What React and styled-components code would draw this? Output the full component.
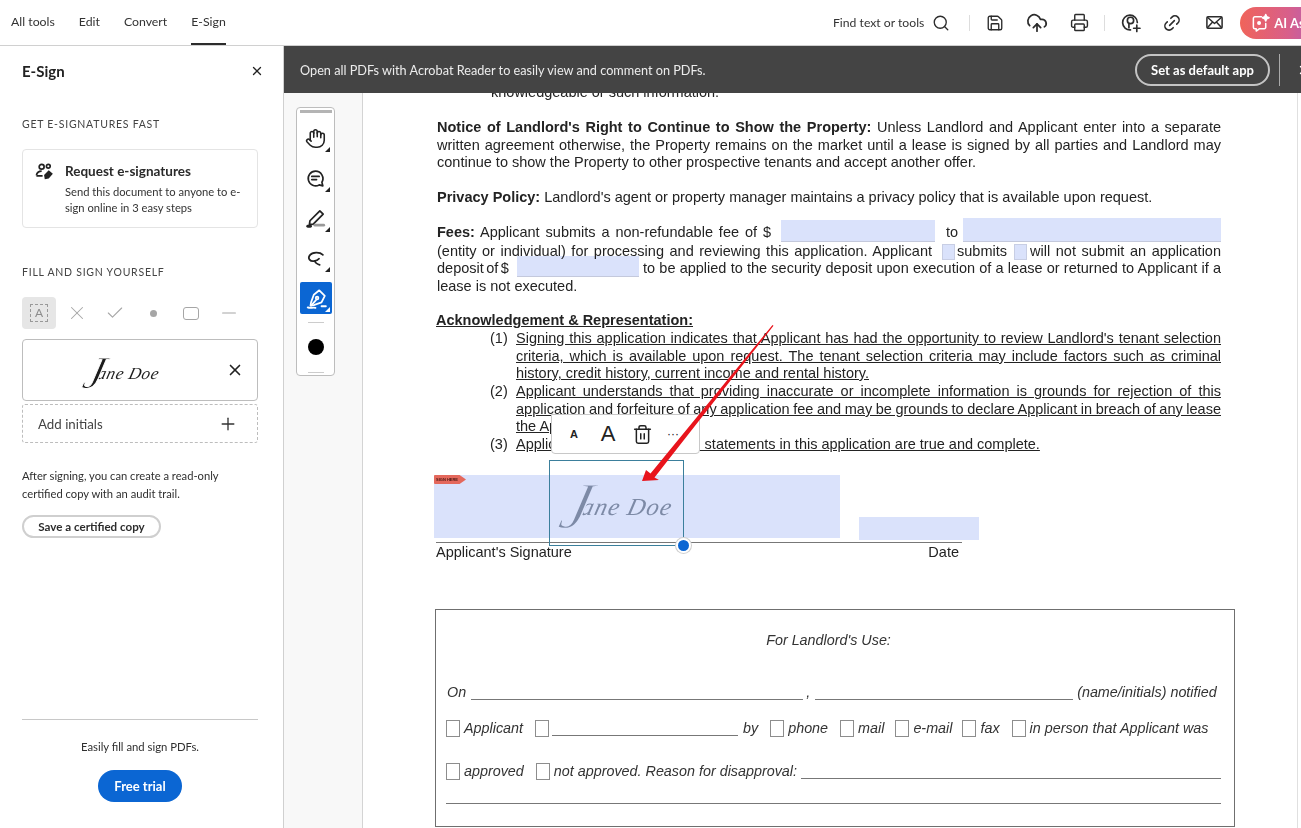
import React from "react";
import styled, { createGlobalStyle, css } from "styled-components";
import { Search, Save, CloudUpload, Printer, Link2, X, Plus, Trash2, Hand, Check, Minus } from "lucide-react";

const Global = createGlobalStyle`
  html, body { margin: 0; padding: 0; background: #fff; }
  * { box-sizing: border-box; }
`;
const UI = `"Lato", "Noto Sans", sans-serif`;
const DOC = `"Liberation Sans", Arial, sans-serif`;

const Shell = styled.div`
  width: 1301px; height: 828px; overflow: hidden; display: flex; flex-direction: column;
  font-family: ${UI}; color: #2c2c2c; background: #fff;
`;
const TopBar = styled.header`
  flex: 0 0 46px; display: flex; align-items: center; border-bottom: 1px solid #d0d0d0; overflow: hidden;
`;
const Nav = styled.nav`
  flex: 0 0 833px; height: 45px; display: flex; gap: 24px; padding-left: 11px;
`;
const NavItem = styled.a`
  height: 45px; display: flex; align-items: center; font-size: 12.3px; color: #333;
  padding-bottom: 1px; border-bottom: 2px solid ${p => (p.$active ? "#2c2c2c" : "transparent")};
`;
const FindText = styled.span`
  flex: 0 0 91px; white-space: nowrap; font-size: 12.2px; color: #333; margin-right: 8px;
`;
const SearchSlot = styled.span`
  flex: 0 0 18px; display: flex; color: #2c2c2c;
`;
const VRule = styled.span`
  flex: 0 0 1px; height: 16px; background: #ddd; margin: 0 ${p => p.$r}px 0 ${p => p.$l}px;
`;
const IconSlot = styled.span`
  flex: 0 0 42px; display: flex; align-items: center; justify-content: center; color: #2c2c2c;
`;
const AiPill = styled.div`
  flex: 0 0 120px; margin-left: 5px; height: 32px; border-radius: 16px; display: flex; align-items: center; gap: 4px; padding-left: 11px;
  color: #fff; font-size: 13px; font-weight: 700; white-space: nowrap;
  background: linear-gradient(90deg, #f0645a 0%, #d85f8a 40%, #a85fc4 75%);
  & > svg { flex: 0 0 19px; }
`;
const Body = styled.div`
  flex: 1; display: flex; min-height: 0;
`;
const Side = styled.aside`
  flex: 0 0 284px; border-right: 1px solid #d0d0d0; padding: 0 25px 26px 22px; display: flex; flex-direction: column;
`;
const SideHead = styled.div`
  height: 52px; display: flex; align-items: center; justify-content: space-between; padding-bottom: 2px;
`;
const SideTitle = styled.h2`
  margin: 0; font-size: 15px; font-weight: 700; color: #222;
`;
const CloseBtn = styled.span`
  display: flex; margin-right: -6px; color: #222;
`;
const SectionLabel = styled.div`
  font-size: 10.5px; letter-spacing: .75px; color: #444; line-height: 14px; margin-top: ${p => p.$top}px;
`;
const RequestCard = styled.div`
  margin-top: 18px; height: 79px; border: 1px solid #e4e4e4; border-radius: 4px; display: flex; gap: 11px; padding: 12px 10px 0 12px;
`;
const RequestIcon = styled.svg`
  flex: 0 0 19px; width: 19px; height: 19px; fill: none; stroke: #222; stroke-width: 1.8;
`;
const RequestText = styled.div``;
const RequestTitle = styled.div`
  font-size: 13.5px; font-weight: 700; line-height: 18px; color: #2a2a2a;
`;
const RequestDesc = styled.div`
  font-size: 11.2px; line-height: 16px; color: #333; margin-top: 4px; white-space: nowrap;
`;
const ToolRow = styled.div`
  display: flex; margin-top: 18px;
`;
const FieldTool = styled.span`
  flex: 0 0 38px; height: 32px; display: flex; align-items: center; justify-content: center; color: #a6a6a6;
  ${p => p.$first && css`
    flex: 0 0 34px; background: #e6e6e6; border-radius: 4px; margin: 0 2px 0 0;
  `}
`;
const Dot = styled.span`
  width: 7px; height: 7px; border-radius: 50%; background: #a6a6a6;
`;
const RoundBox = styled.span`
  width: 16px; height: 13px; border: 1.4px solid #a6a6a6; border-radius: 3px;
`;
const DashedA = styled.span`
  width: 18px; height: 18px; border: 1px dashed #999; font-size: 12px; line-height: 16px; text-align: center; color: #8c8c8c;
`;
const SignatureCard = styled.div`
  margin-top: 10px; height: 62px; border: 1px solid #bdbdbd; border-radius: 4px; display: flex; align-items: center;
  padding: 0 13px 0 0; position: relative;
`;
const SignatureSlot = styled.div`
  flex: 1; display: flex; justify-content: center; padding: 0 4px 0 0;
`;
const Signature = styled.span`
  font-family: "Liberation Serif", serif; font-style: italic; white-space: nowrap; display: inline-flex; align-items: baseline;
  font-size: ${p => p.$size}px; color: ${p => p.$color}; letter-spacing: ${p => p.$spacing}px; transform: skewX(-14deg);
`;
const BigJ = styled.span`
  font-size: 2.7em; line-height: .3; position: relative; top: .2em; margin-right: -.16em;
  -webkit-text-stroke: ${p => p.$thin}px ${p => p.$bg};
`;
const AddInitials = styled.div`
  margin-top: 3px; height: 39px; border: 1px dashed #bdbdbd; border-radius: 3px; display: flex; align-items: center;
  justify-content: space-between; padding: 0 19px 0 15px; font-size: 13.3px; color: #444;
`;
const Note = styled.p`
  margin: 24px 0 0; font-size: 11.2px; line-height: 18px; color: #2f2f2f;
`;
const OutlineBtn = styled.button`
  margin-top: 12px; width: 139px; height: 23px; border: 2px solid #cfcfcf; border-radius: 12px; background: #fff;
  font: 700 11.6px ${UI}; color: #2c2c2c; padding: 0;
`;
const SideFoot = styled.div`
  margin-top: auto; border-top: 1px solid #c8c8c8; padding-top: 19px; display: flex; flex-direction: column; align-items: center;
`;
const FootText = styled.div`
  font-size: 11.3px; line-height: 16px; color: #2f2f2f;
`;
const PrimaryBtn = styled.button`
  margin-top: 15px; width: 84px; height: 32px; border: 0; border-radius: 16px; background: #0b66d3; color: #fff;
  font: 700 13px ${UI}; padding: 0;
`;
const Main = styled.main`
  flex: 1; min-width: 0; display: flex; flex-direction: column;
`;
const Banner = styled.div`
  flex: 0 0 47px; background: #444; display: flex; align-items: center; padding-left: 16px; overflow: hidden; position: relative; z-index: 2;
`;
const BannerText = styled.span`
  flex: 0 0 835px; color: #ececec; font-size: 12.7px; white-space: nowrap;
`;
const BannerBtn = styled.button`
  flex: 0 0 135px; height: 32px; border: 2px solid #c4c4c4; border-radius: 16px; background: transparent; color: #fff;
  font: 700 13px ${UI}; padding: 0;
`;
const BannerRule = styled.span`
  flex: 0 0 1px; height: 32px; background: #aaa; margin: 0 17px 0 9px;
`;
const BannerClose = styled.span`
  flex: 0 0 auto; display: flex; color: #fff;
`;
const Viewer = styled.div`
  flex: 1; min-height: 0; display: flex; background: #f8f8f8; overflow: hidden;
`;
const Rail = styled.div`
  flex: 0 0 78px; padding: 14px 0 0 12px;
`;
const QuickTools = styled.div`
  width: 39px; height: 269px; background: #fff; border: 1px solid #bdbdbd; border-radius: 4px; padding: 2px 3px 0;
  display: flex; flex-direction: column; align-items: center;
`;
const Handle = styled.span`
  flex: 0 0 3px; width: 32px; background: #b4b4b4; margin-bottom: 9px;
`;
const QuickBtn = styled.span`
  flex: 0 0 32px; width: 32px; margin-bottom: 8px; display: flex; align-items: center; justify-content: center; position: relative;
  border-radius: 2px; color: ${p => (p.$active ? "#fff" : "#222")}; background: ${p => (p.$active ? "#0b66d3" : "transparent")};
  &::after {
    content: ""; position: absolute; right: 2px; bottom: 2px; width: 0; height: 0;
    border-left: 5px solid transparent; border-bottom: 5px solid ${p => (p.$active ? "#fff" : "#222")};
  }
`;
const QuickRule = styled.span`
  flex: 0 0 1px; width: 16px; background: #ccc;
`;
const Swatch = styled.span`
  flex: 0 0 16px; width: 16px; margin: 16px 0 17px; border-radius: 50%; background: #000;
`;
const Page = styled.div`
  flex: 1; min-width: 0; background: #fff; border-left: 1px solid #d4d4d4; position: relative;
  font-family: ${DOC}; color: #232323; font-size: 14.5px;
`;
const ScrollRule = styled.span`
  position: absolute; top: 0; bottom: 0; right: 3px; width: 1px; background: #e0e0e0;
`;
const Flow = styled.div`
  margin-top: -10px; padding-left: 74px;
`;
const fitted = css`
  white-space: normal; height: 18px; overflow: hidden; text-align: justify; text-align-last: justify; word-spacing: -1.6px;
`;
const Line = styled.div`
  height: 18px; line-height: 18px; white-space: nowrap;
  width: ${p => (p.$w ? `${p.$w}px` : "auto")}; margin-top: ${p => p.$gap || 0}px; margin-left: ${p => p.$ml || 0}px;
  ${p => p.$fit && fitted}
  ${p => p.$u && css`text-decoration: underline;`}
`;
const SegRow = styled.div`
  display: flex; height: 18px; line-height: 18px; white-space: nowrap; margin-top: ${p => p.$gap || 0}px;
`;
const Seg = styled.span`
  flex: 0 0 auto; width: ${p => (p.$w ? `${p.$w}px` : "auto")}; margin-left: ${p => p.$ml || 0}px; word-spacing: ${p => p.$tight ? "-1.6px" : "normal"};
  ${p => p.$fit && fitted}
`;
const ListRow = styled.div`
  display: flex; margin-top: ${p => p.$gap || 0}px; height: 18px; line-height: 18px;
`;
const ListNo = styled.span`
  flex: 0 0 79px; padding-left: 53px;
`;
const ListText = styled(Line)`
  flex: 0 0 705px;
`;
const SigLabels = styled.div`
  margin: 89px 0 0 -1px; width: 526px; border-top: 1px solid #777; display: flex; justify-content: space-between; padding: 0 3px 0 0;
  height: 19px; line-height: 18px;
`;
const LandlordBox = styled.section`
  margin: 48px 0 0 -2px; width: 800px; height: 218px; border: 1px solid #6f6f6f; padding: 20px 13px 0 10px;
  font-style: italic; color: #333; font-size: 14.35px;
`;
const BoxTitle = styled.div`
  height: 20px; line-height: 20px; text-align: center; padding-right: 10px;
`;
const BoxRow = styled.div`
  height: 20px; line-height: 20px; display: flex; align-items: flex-end; white-space: nowrap; margin-top: ${p => p.$gap}px;
`;
const Blank = styled.span`
  flex: ${p => (p.$w ? `0 0 ${p.$w}px` : "1")}; height: 1px; background: #777; margin: 0 ${p => p.$r || 0}px 2px ${p => p.$l || 0}px;
`;
const Box = styled.span`
  flex: 0 0 14px; height: 17px; border: 1px solid #8d8d8d; margin: 0 ${p => p.$r ?? 4}px 1px ${p => p.$l || 0}px;
`;
const BoxText = styled.span`
  margin-left: ${p => p.$l || 0}px;
`;
const FullRule = styled.div`
  height: 1px; background: #777; margin-top: 22px;
`;
const Field = styled.span`
  position: absolute; left: ${p => p.$x - 363}px; top: ${p => p.$y - 93}px; width: ${p => p.$w}px; height: ${p => p.$h}px;
  background: #dae2fb; ${p => p.$under && css`border-bottom: 1px solid #c4c9dc;`}
  ${p => p.$mark && css`border: 1px solid #c8cee4;`} mix-blend-mode: multiply;
`;
const SigBox = styled.div`
  position: absolute; left: ${549 - 363}px; top: ${460 - 93}px; width: 135px; height: 86px; border: 1px solid #3b7f9c;
  display: flex; align-items: flex-end; padding: 0 0 24px 13px;
`;
const ResizeDot = styled.span`
  position: absolute; right: -8px; bottom: -8px; width: 15px; height: 15px; border-radius: 50%; background: #0b66d3; border: 2px solid #fff;
  box-shadow: 0 0 0 1px #cfcfcf;
`;
const MiniBar = styled.div`
  position: absolute; left: ${551 - 363}px; top: ${414 - 93}px; width: 149px; height: 40px; background: #fff; border: 1px solid #c8c8c8;
  border-radius: 0 0 4px 4px; display: flex; align-items: center; font-family: ${DOC}; color: #222;
`;
const MiniItem = styled.span`
  flex: 0 0 ${p => p.$w}px; display: flex; justify-content: center; align-items: center; font-weight: ${p => p.$bold ? 700 : 400}; font-size: ${p => p.$size || 14}px;
`;
const Arrow = styled.svg`
  position: absolute; left: ${630 - 363}px; top: ${320 - 93}px; width: 150px; height: 170px; pointer-events: none;
`;
const SignTag = styled.span`
  position: absolute; left: ${434 - 363}px; top: ${475 - 93}px; width: 32px; height: 9px; background: #e4685c; color: #4a1510; white-space: nowrap; overflow: hidden;
  clip-path: polygon(0 0, 80% 0, 100% 50%, 80% 100%, 0 100%); font: 700 4px/9px ${DOC}; padding-left: 2px; border-radius: 1px 0 0 1px;
`;

const Ic = ({ children, size = 18, sw = 1.6, fill = "none", vb = "0 0 20 20" }) => (
  <svg width={size} height={size} viewBox={vb} fill={fill} stroke="currentColor" strokeWidth={sw} strokeLinecap="round" strokeLinejoin="round">
    {children}
  </svg>
);

const MailIcon = () => (
  <Ic size={19}><rect x="2" y="4" width="16" height="12" rx="1.5" /><path d="M2.5 4.5 10 11l7.5-6.5M2.5 15.5l5.5-6M17.500 15.500l-5.500-6" /></Ic>
);
const ShareIcon = () => (
  <Ic size={21}><path d="M16.500 10a7 7 0 1 0-6.500 7" /><circle cx="10" cy="8" r="3" /><path d="M8.500 11v4M13 15.500h6M16 12.500v6" /></Ic>
);
const AiIcon = () => (
  <Ic size={19} sw={1.6}><path d="M11 4H4a1.500 1.500 0 0 0-1.500 1.500V15A1.500 1.500 0 0 0 4 16.500h1.500V19l3.500-2.500h5a1.500 1.500 0 0 0 1.500-1.500v-4" /><path d="M15.500 1.500l1 2.500 2.500 1-2.500 1-1 2.500-1-2.500-2.500-1 2.500-1z" fill="currentColor" /><circle cx="8.500" cy="10.500" r="1.300" fill="currentColor" /></Ic>
);
const CommentIcon = () => (
  <Ic size={21}><path d="M10 3a7 7 0 1 0 3.500 13.100L17 17l-.9-3.500A7 7 0 0 0 10 3z" /><path d="M6.500 8h7M6.500 11h4.500" /></Ic>
);
const PenIcon = () => (
  <Ic size={22}><path d="M4.500 12.500 13.500 3.500l3 3-9 9-3.500.5z" /><path d="M2.500 17.500h2.500" strokeWidth="2.600" /><path d="M9 16.500h8" stroke="#999" strokeWidth="2.600" /></Ic>
);
const LassoIcon = () => (
  <Ic size={21} sw={1.7}><path d="M17 6.500C14 3.500 7 3.800 4.500 7c-2.200 3 .5 6 4 5.500 2.500-.4 4-1.300 4.800-2.300" /><path d="M9.500 12.500c.3 1.500 2 2.800 4.500 3.500" /></Ic>
);
const SignPenIcon = () => (
  <Ic size={22}><path d="M13 3l5 5-3 6-7 2.500-3 .5.500-3L8 7z" /><path d="M5.500 17 10 12" /><circle cx="11" cy="10" r="1.200" /><path d="M2.500 18.500c3 1.500 4-.5 7 .5M15 17.500h4" /></Ic>
);

const JaneDoe = ({ size, color, spacing, thin, bg }) => (
  <Signature $size={size} $color={color} $spacing={spacing}><BigJ $thin={thin} $bg={bg}>J</BigJ>ane Doe</Signature>
);

export default function App() {
  return (
    <Shell>
      <Global />
      <TopBar>
        <Nav>
          <NavItem>All tools</NavItem>
          <NavItem>Edit</NavItem>
          <NavItem>Convert</NavItem>
          <NavItem $active>E-Sign</NavItem>
        </Nav>
        <FindText>Find text or tools</FindText>
        <SearchSlot><Search size={18} strokeWidth={1.8} /></SearchSlot>
        <VRule $l={19} $r={4} />
        <IconSlot><Save size={18} strokeWidth={1.8} /></IconSlot>
        <IconSlot><CloudUpload size={22} strokeWidth={1.9} /></IconSlot>
        <IconSlot><Printer size={19} strokeWidth={1.8} /></IconSlot>
        <VRule $l={4} $r={4} />
        <IconSlot><ShareIcon /></IconSlot>
        <IconSlot><Link2 size={20} strokeWidth={1.9} transform="rotate(-45)" /></IconSlot>
        <IconSlot><MailIcon /></IconSlot>
        <AiPill><AiIcon />AI Assistant</AiPill>
      </TopBar>
      <Body>
        <Side>
          <SideHead>
            <SideTitle>E-Sign</SideTitle>
            <CloseBtn><X size={14} strokeWidth={2.2} /></CloseBtn>
          </SideHead>
          <SectionLabel $top={19}>GET E-SIGNATURES FAST</SectionLabel>
          <RequestCard>
            <RequestIcon viewBox="0 0 20 20">
              <circle cx="7" cy="5" r="2.600" /><circle cx="14" cy="4.500" r="2" />
              <path d="M1.500 14c.5-3 2.500-4.500 5.500-4.500M1.500 14.500H8" />
              <path d="M11 17l-.5-3 4-4 3 2.500-3.500 4z" fill="#222" />
            </RequestIcon>
            <RequestText>
              <RequestTitle>Request e-signatures</RequestTitle>
              <RequestDesc>Send this document to anyone to e-<br />sign online in 3 easy steps</RequestDesc>
            </RequestText>
          </RequestCard>
          <SectionLabel $top={37}>FILL AND SIGN YOURSELF</SectionLabel>
          <ToolRow>
            <FieldTool $first><DashedA>A</DashedA></FieldTool>
            <FieldTool><X size={22} strokeWidth={1.1} /></FieldTool>
            <FieldTool><Check size={20} strokeWidth={1.3} /></FieldTool>
            <FieldTool><Dot /></FieldTool>
            <FieldTool><RoundBox /></FieldTool>
            <FieldTool><Minus size={22} strokeWidth={1.2} /></FieldTool>
          </ToolRow>
          <SignatureCard>
            <SignatureSlot><JaneDoe size={17} color="#1c1c1c" spacing={0.6} thin={1} bg="#fff" /></SignatureSlot>
            <X size={18} strokeWidth={2.2} color="#222" />
          </SignatureCard>
          <AddInitials>Add initials<Plus size={20} strokeWidth={1.6} color="#333" /></AddInitials>
          <Note>After signing, you can create a read-only<br />certified copy with an audit trail.</Note>
          <OutlineBtn>Save a certified copy</OutlineBtn>
          <SideFoot>
            <FootText>Easily fill and sign PDFs.</FootText>
            <PrimaryBtn>Free trial</PrimaryBtn>
          </SideFoot>
        </Side>
        <Main>
          <Banner>
            <BannerText>Open all PDFs with Acrobat Reader to easily view and comment on PDFs.</BannerText>
            <BannerBtn>Set as default app</BannerBtn>
            <BannerRule />
            <BannerClose><X size={14} strokeWidth={2.2} /></BannerClose>
          </Banner>
          <Viewer>
            <Rail>
              <QuickTools>
                <Handle />
                <QuickBtn><Hand size={21} strokeWidth={1.8} /></QuickBtn>
                <QuickBtn><CommentIcon /></QuickBtn>
                <QuickBtn><PenIcon /></QuickBtn>
                <QuickBtn><LassoIcon /></QuickBtn>
                <QuickBtn $active><SignPenIcon /></QuickBtn>
                <QuickRule />
                <Swatch />
                <QuickRule />
              </QuickTools>
            </Rail>
            <Page>
              <Flow>
                <Line $ml={54}>knowledgeable or such information.</Line>
                <Line $w={784} $fit $gap={17}><b>Notice of Landlord's Right to Continue to Show the Property:</b> Unless Landlord and Applicant enter into a separate</Line>
                <Line $w={784} $fit>written agreement otherwise, the Property remains on the market until a lease is signed by all parties and Landlord may</Line>
                <Line $gap={-1}>continue to show the Property to other prospective tenants and accept another offer.</Line>
                <Line $gap={17}><b>Privacy Policy:</b> Landlord's agent or property manager maintains a privacy policy that is available upon request.</Line>
                <SegRow $gap={17}>
                  <Seg $w={334} $fit><b>Fees:</b> Applicant submits a non-refundable fee of $</Seg>
                  <Seg $ml={175}>to</Seg>
                </SegRow>
                <SegRow $gap={1}>
                  <Seg $w={495} $fit>(entity or individual) for processing and reviewing this application. Applicant</Seg>
                  <Seg $ml={25} $w={52}>submits</Seg>
                  <Seg $ml={21} $w={191} $fit>will not submit an application</Seg>
                </SegRow>
                <SegRow $gap={-1}>
                  <Seg $w={74} $tight>deposit of $</Seg>
                  <Seg $ml={132} $w={578} $fit>to be applied to the security deposit upon execution of a lease or returned to Applicant if a</Seg>
                </SegRow>
                <Line>lease is not executed.</Line>
                <Line $gap={16} $ml={-1} $u><b>Acknowledgement &amp; Representation:</b></Line>
                <ListRow><ListNo>(1)</ListNo><ListText $fit $u>Signing this application indicates that Applicant has had the opportunity to review Landlord's tenant selection</ListText></ListRow>
                <ListRow><ListNo /><ListText $fit $u>criteria, which is available upon request. The tenant selection criteria may include factors such as criminal</ListText></ListRow>
                <ListRow $gap={-1}><ListNo /><ListText $u>history, credit history, current income and rental history.</ListText></ListRow>
                <ListRow><ListNo>(2)</ListNo><ListText $fit $u>Applicant understands that providing inaccurate or incomplete information is grounds for rejection of this</ListText></ListRow>
                <ListRow><ListNo /><ListText $fit $u>application and forfeiture of any application fee and may be grounds to declare Applicant in breach of any lease</ListText></ListRow>
                <ListRow $gap={-1}><ListNo /><ListText $u>the Application.</ListText></ListRow>
                <ListRow><ListNo>(3)</ListNo><ListText $u>Applicant certifies that all the statements in this application are true and complete.</ListText></ListRow>
                <SigLabels><span>Applicant's Signature</span><span>Date</span></SigLabels>
                <LandlordBox>
                  <BoxTitle>For Landlord's Use:</BoxTitle>
                  <BoxRow $gap={32}>
                    <BoxText $l={1}>On</BoxText>
                    <Blank $l={5} $w={332} />
                    <BoxText $l={3}>,</BoxText>
                    <Blank $l={5} $w={258} />
                    <BoxText $l={4}>(name/initials) notified</BoxText>
                  </BoxRow>
                  <BoxRow $gap={16}>
                    <Box /><BoxText>Applicant</BoxText>
                    <Box $l={12} $r={3} />
                    <Blank $w={186} />
                    <BoxText $l={5}>by</BoxText>
                    <Box $l={12} /><BoxText>phone</BoxText>
                    <Box $l={12} /><BoxText>mail</BoxText>
                    <Box $l={11} /><BoxText>e-mail</BoxText>
                    <Box $l={10} /><BoxText>fax</BoxText>
                    <Box $l={12} /><BoxText>in person that Applicant was</BoxText>
                  </BoxRow>
                  <BoxRow $gap={23}>
                    <Box /><BoxText>approved</BoxText>
                    <Box $l={12} /><BoxText>not approved. Reason for disapproval:</BoxText>
                    <Blank $l={4} />
                  </BoxRow>
                  <FullRule />
                </LandlordBox>
              </Flow>
              <Field $x={781} $y={220} $w={154} $h={22} $under />
              <Field $x={963} $y={218} $w={258} $h={24} $under />
              <Field $x={942} $y={244} $w={13} $h={16} $mark />
              <Field $x={1014} $y={244} $w={13} $h={16} $mark />
              <Field $x={517} $y={256} $w={122} $h={21} $under />
              <Field $x={434} $y={475} $w={406} $h={63} />
              <Field $x={859} $y={517} $w={120} $h={23} />
              <SignTag>SIGN HERE</SignTag>
              <SigBox>
                <JaneDoe size={24.5} color="#7d8aa6" spacing={1.2} thin={1.6} bg="#dae2fb" />
                <ResizeDot />
              </SigBox>
              <MiniBar>
                <MiniItem $w={44} $bold $size={11}>A</MiniItem>
                <MiniItem $w={24} $size={22}>A</MiniItem>
                <MiniItem $w={44}><Trash2 size={21} strokeWidth={1.7} /></MiniItem>
                <MiniItem $w={18} $size={12}>···</MiniItem>
              </MiniBar>
              <Arrow viewBox="630 320 150 170">
                <polygon points="772.500,325 773.500,325.700 654.500,477.500 659,480 642,481 646,470 650.500,473.500" fill="#e8141c" />
              </Arrow>
              <ScrollRule />
            </Page>
          </Viewer>
        </Main>
      </Body>
    </Shell>
  );
}
